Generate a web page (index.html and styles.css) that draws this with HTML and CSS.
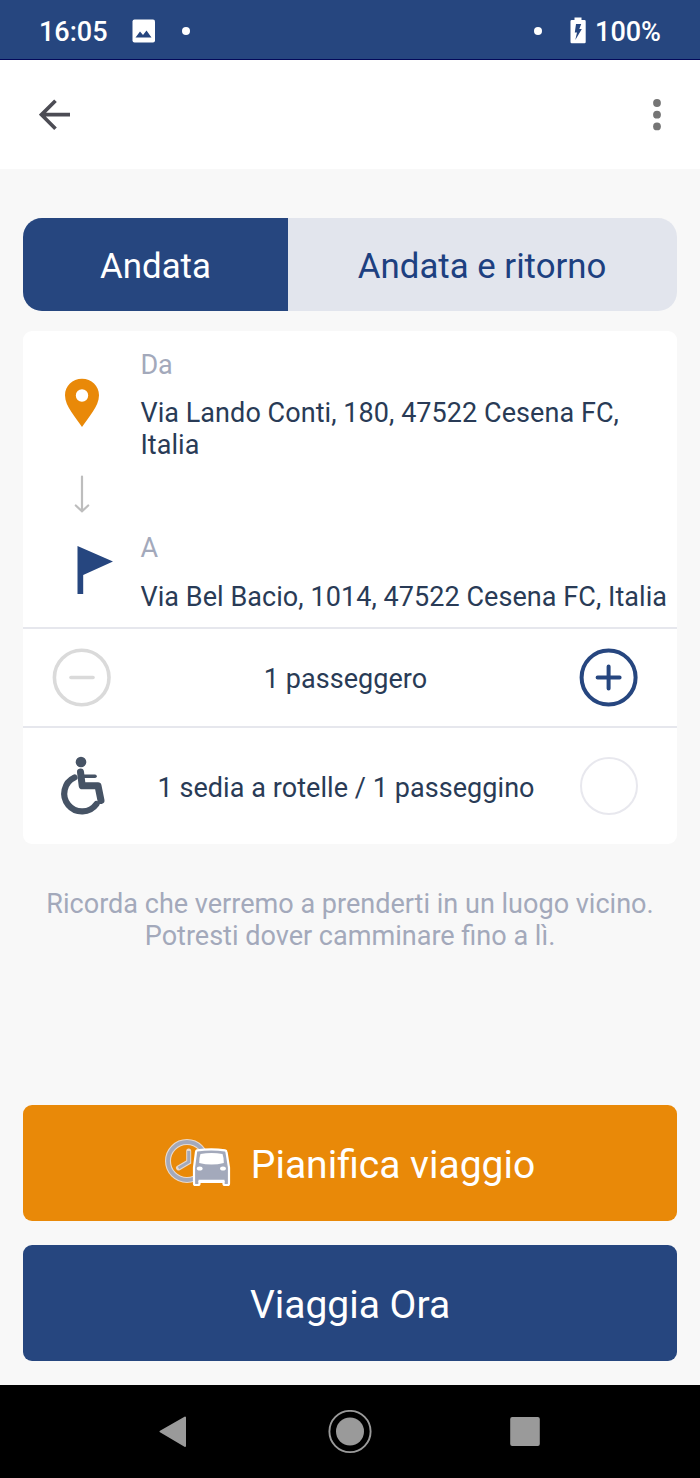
FILE: index.html
```html
<!DOCTYPE html>
<html lang="it">
<head>
    <meta charset="UTF-8">
    <meta name="viewport" content="width=device-width, initial-scale=1.0">
    <title>Prenota viaggio</title>
    <link rel="stylesheet" href="styles.css">
</head>
<body>

    <!-- Status bar -->
    <div class="statusbar">
        <span class="clock">16:05</span>
        <svg class="picture" width="24" height="24" viewBox="0 0 24 24">
            <rect x="0.5" y="0.5" width="22.5" height="23" rx="2" fill="#fff"/>
            <path d="M3.5 18.5 8 12.5 11 16 14.5 11.5 19.5 18.5Z" fill="#26467f"/>
        </svg>
        <span class="dot"></span>
        <span class="dot dot-right"></span>
        <svg class="battery" width="16" height="27" viewBox="0 0 16 27">
            <path d="M4.5 0.5H11.5V3H14.5Q15.7 3 15.7 4.2V25Q15.7 26.2 14.5 26.2H1.7Q0.5 26.2 0.5 25V4.2Q0.5 3 1.7 3H4.5Z" fill="#fff"/>
            <path d="M6 7H11.2L9.3 12H11.8L5.3 23 7 15.5H4.8Z" fill="#26467f"/>
        </svg>
        <span class="percent">100%</span>
    </div>

    <!-- Toolbar -->
    <header class="toolbar">
        <svg width="32" height="32" viewBox="0 0 32 32">
            <path d="M31 15.7H3M16.5 1.7 2.5 15.7 16.5 29.7" fill="none" stroke="#4c4c54" stroke-width="3.7"/>
        </svg>
        <svg width="8" height="32" viewBox="0 0 8 32" fill="#757575">
            <circle cx="4" cy="4" r="3.9"/>
            <circle cx="4" cy="15.7" r="3.9"/>
            <circle cx="4" cy="27.4" r="3.9"/>
        </svg>
    </header>

    <main class="content">
        <div class="tabs">
            <div class="tab active">Andata</div>
            <div class="tab">Andata e ritorno</div>
        </div>

        <div class="card">
            <div class="stop from">
                <div class="stop-icons">
                    <svg class="pin" width="36" height="50" viewBox="0 0 36 50">
                        <path fill-rule="evenodd" d="M18 0.7C8.5 0.7 1 7.8 1 17.2 1 28.5 12 39.5 18 49 24 39.5 35 28.5 35 17.2 35 7.8 27.5 0.7 18 0.7ZM18 11.3A6.2 6.2 0 1 1 18 23.7 6.2 6.2 0 1 1 18 11.3Z" fill="#e98908"/>
                    </svg>
                    <svg class="down" width="16" height="38" viewBox="0 0 16 38">
                        <path d="M8 1.5V36M1.8 30.5 8 36.3 14.2 30.5" fill="none" stroke="#bdbdbd" stroke-width="2.2" stroke-linecap="round"/>
                    </svg>
                </div>
                <div class="stop-text">
                    <div class="label">Da</div>
                    <div class="address">Via Lando Conti, 180, 47522 Cesena FC, Italia</div>
                </div>
            </div>
            <div class="stop to">
                <div class="stop-icons">
                    <svg class="flag" width="37" height="50" viewBox="0 0 37 50">
                        <path d="M0.5 1 36 16.5 6.2 30V49H0.5Z" fill="#26467f"/>
                    </svg>
                </div>
                <div class="stop-text">
                    <div class="label">A</div>
                    <div class="address">Via Bel Bacio, 1014, 47522 Cesena FC, Italia</div>
                </div>
            </div>

            <div class="option">
                <svg width="60" height="60" viewBox="0 0 60 60" fill="none" stroke="#dadada" stroke-width="3.6">
                    <circle cx="29.7" cy="29.5" r="27.3"/>
                    <path d="M19 29.5H41" stroke-linecap="round"/>
                </svg>
                <span class="option-label">1 passeggero</span>
                <svg width="60" height="60" viewBox="0 0 60 60" fill="none" stroke="#26467f" stroke-width="4">
                    <circle cx="29.6" cy="29.5" r="27"/>
                    <path d="M18.6 29.5H40.6M29.6 18.5V40.5" stroke-linecap="round"/>
                </svg>
            </div>

            <div class="option last">
                <svg width="60" height="60" viewBox="0 0 60 60" fill="none" stroke="#465365">
                    <circle cx="29" cy="6" r="5.3" fill="#465365" stroke="none"/>
                    <path d="M28.5 16 30.2 29.7H46L49 44.5" stroke-width="7" stroke-linecap="round" stroke-linejoin="round"/>
                    <path d="M31 20.3H43" stroke-width="3.6" stroke-linecap="round"/>
                    <path d="M22.5 21.5A17.8 17.8 0 1 0 44.5 48" stroke-width="6.2" stroke-linecap="round"/>
                </svg>
                <span class="option-label">1 sedia a rotelle / 1 passeggino</span>
                <span class="radio"></span>
            </div>
        </div>

        <p class="note">Ricorda che verremo a prenderti in un luogo vicino. Potresti dover camminare fino a lì.</p>

        <div class="buttons">
            <button class="btn plan">
                <svg width="66" height="50" viewBox="0 0 66 50">
                    <circle cx="22" cy="23" r="19" fill="none" stroke="#e8d9cc" stroke-width="6"/>
                    <circle cx="22" cy="23" r="19" fill="none" stroke="#a3a9bb" stroke-width="3.8"/>
                    <path d="M23.7 13V24L13.5 30" fill="none" stroke="#e8d9cc" stroke-width="5" stroke-linecap="round"/>
                    <path d="M23.7 13V24L13.5 30" fill="none" stroke="#a3a9bb" stroke-width="3"/>
                    <path d="M32 12.3Q46.5 10.5 60 12.3Q61.3 12.5 61.5 14L64 29.5V45.5Q64 47 62.5 47H60Q58.5 47 58.5 45.5V44H34.5V45.5Q34.5 47 33 47H30.5Q29 47 29 45.5V29.5L31 14Q31.2 12.5 32 12.3Z" fill="#a3a9bb" stroke="#fff" stroke-width="2.2"/>
                    <path d="M35.5 16Q46.5 14 57.5 16Q59 20 58.8 25Q46.5 28 34.2 25Q34 20 35.5 16Z" fill="#fff"/>
                    <ellipse cx="34.7" cy="30.5" rx="2.9" ry="2.1" fill="#fff"/>
                    <ellipse cx="58" cy="30.5" rx="2.9" ry="2.1" fill="#fff"/>
                    <path d="M33.5 43H59.5" stroke="#fff" stroke-width="2.5"/>
                </svg>
                <span>Pianifica viaggio</span>
            </button>
            <button class="btn now">Viaggia Ora</button>
        </div>
    </main>

    <!-- Android navigation -->
    <nav class="navbar">
        <svg width="30" height="34" viewBox="0 0 30 34">
            <path d="M2.5 16.5 27 2.5V31Z" fill="#9a9a9a" stroke="#9a9a9a" stroke-width="2" stroke-linejoin="round"/>
        </svg>
        <svg class="home" width="44" height="44" viewBox="0 0 44 44">
            <circle cx="22" cy="21.5" r="20.6" fill="none" stroke="#9a9a9a" stroke-width="1.9"/>
            <circle cx="22" cy="21.5" r="14" fill="#9a9a9a"/>
        </svg>
        <svg width="30" height="30" viewBox="0 0 30 30">
            <rect x="0.2" y="0" width="29.6" height="29" rx="2" fill="#9a9a9a"/>
        </svg>
    </nav>

</body>
</html>
```
FILE: styles.css
```css
* {
    box-sizing: border-box;
}

body {
    margin: 0;
    width: 700px;
    height: 1478px;
    display: flex;
    flex-direction: column;
    background-color: #f8f8f8;
    font-family: Roboto, "Liberation Sans", sans-serif;
    font-size: 27px;
    line-height: 32px;
    color: #293b56;
}

svg {
    display: block;
    flex-shrink: 0;
}

/* Status bar */
.statusbar {
    display: flex;
    align-items: center;
    height: 60px;
    padding: 2px 39px 0;
    background-color: #26467f;
    border-bottom: 1px solid #04095a;
    color: #fff;
    font-weight: 500;
}

.clock {
    width: 93px;
    padding-top: 2px;
}

.percent {
    padding-top: 2px;
}

.picture {
    margin-right: 26px;
}

.dot {
    width: 8px;
    height: 8px;
    border-radius: 50%;
    background-color: #fff;
}

.dot-right {
    margin-left: auto;
}

.battery {
    margin: 0 9px 0 28px;
}

/* Toolbar */
.toolbar {
    display: flex;
    justify-content: space-between;
    align-items: center;
    height: 109px;
    padding: 0 39px;
    background-color: #fff;
}

.content {
    flex: 1;
    display: flex;
    flex-direction: column;
    padding: 49px 23.4px 24px;
}

/* Andata / ritorno */
.tabs {
    display: flex;
    height: 93px;
    border-radius: 19px;
    overflow: hidden;
    background-color: #e2e5ed;
}

.tab {
    flex: 1;
    display: flex;
    align-items: center;
    justify-content: center;
    padding-top: 3px;
    font-size: 34.8px;
    color: #1d4080;
}

.tab.active {
    flex: 0 0 264.2px;
    background-color: #26467f;
    color: #fff;
}

/* Card */
.card {
    margin-top: 20px;
    height: 513px;
    border-radius: 9px;
    background-color: #fff;
}

.stop {
    display: flex;
}

.stop.from {
    height: 201px;
    padding-top: 18px;
}

.stop.to {
    height: 95px;
}

.stop-icons {
    width: 117px;
    flex-shrink: 0;
}

.pin {
    margin: 29px 0 0 41px;
}

.down {
    margin: 47px 0 0 51px;
}

.flag {
    margin: 13px 0 0 54px;
}

.label {
    margin-bottom: 16px;
    color: #a3a9bb;
}

.stop.to .label {
    margin-bottom: 17px;
}

.address {
    letter-spacing: 0.06px;
}

.option {
    display: flex;
    align-items: center;
    height: 99px;
    padding: 0 38px 0 29px;
    border-top: 2px solid #e6e7ed;
}

.option.last {
    height: 118px;
}

.option-label {
    flex: 1;
    text-align: center;
    padding-top: 3px;
    letter-spacing: 0.06px;
}

.radio {
    width: 58px;
    height: 58px;
    margin-right: 1px;
    border: 2px solid #e8e8ee;
    border-radius: 50%;
}

.note {
    margin: 44px 0 0;
    padding: 0 20px;
    text-align: center;
    font-size: 27.05px;
    color: #a3a9bb;
}

/* Buttons */
.buttons {
    display: flex;
    flex-direction: column;
    gap: 24px;
    margin-top: auto;
}

.btn {
    display: flex;
    align-items: center;
    justify-content: center;
    gap: 20px;
    height: 116px;
    padding: 3px 0 0;
    border: none;
    border-radius: 9px;
    background-color: #26467f;
    color: #fff;
    font-family: inherit;
    font-size: 39px;
}

.btn.plan {
    background-color: #e98908;
}

.btn.plan svg {
    margin-top: -3px;
}

/* Android navigation */
.navbar {
    display: flex;
    justify-content: space-between;
    align-items: center;
    height: 93px;
    padding: 0 160px 0 158px;
    background-color: #000;
}

.home {
    margin-left: 2px;
}
```
